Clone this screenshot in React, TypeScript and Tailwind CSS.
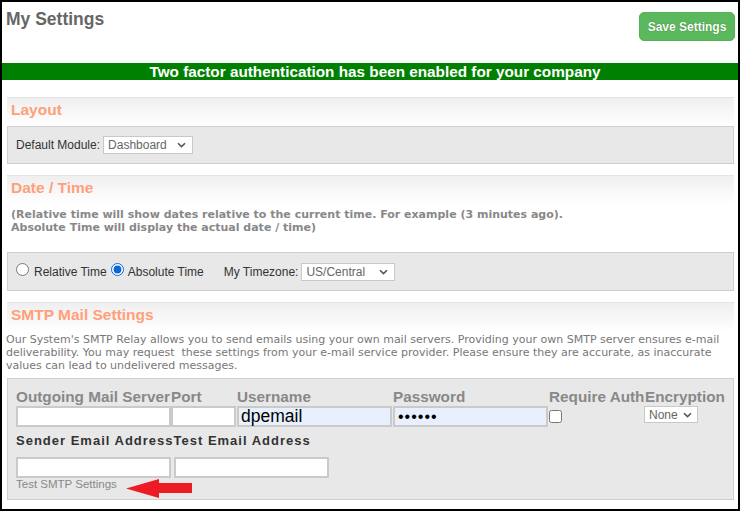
import React from "react";

function Chevron() {
  return (
    <svg width="9" height="6" viewBox="0 0 9 6" className="shrink-0">
      <path d="M1 1.2 L4.5 4.6 L8 1.2" fill="none" stroke="#555" strokeWidth="1.6" />
    </svg>
  );
}

function SectionHeader({ title }: { title: string }) {
  return (
    <div className="h-[29px] border-t border-[#e4e4e4] bg-linear-to-b from-[#efefef] to-white pl-[4px] pt-[2px] text-[15.5px] font-bold leading-[20px] text-[#ffa07a]">
      {title}
    </div>
  );
}

export default function App() {
  return (
    <div className="w-[740px] h-[511px] overflow-hidden border-2 border-black bg-white font-['Liberation_Sans',Arial,sans-serif]">
      {/* Title row */}
      <div className="flex h-[61px] items-start justify-between">
        <h1 className="ml-[4px] mt-[7px] text-[17.5px] font-bold leading-[20px] text-[#666]">My Settings</h1>
        <button className="mr-[3px] mt-[10px] h-[29px] w-[96px] rounded-[5px] border border-[#55b155] bg-[#5cb85c] text-[12px] font-bold text-white [text-shadow:0_0_1px_rgba(0,60,0,0.6)]">
          Save Settings
        </button>
      </div>

      {/* Green bar */}
      <div className="h-[17px] bg-[#008000] pl-[10px] text-center text-[15.3px] font-bold leading-[17px] text-white">
        Two factor authentication has been enabled for your company
      </div>

      <div className="ml-[5px] mr-[4px] mt-[17px]">
        {/* Layout */}
        <SectionHeader title="Layout" />
        <div className="flex h-[38px] items-center border border-[#cfcfcf] bg-[#e8e8e8] pl-[8px] text-[12px] text-[#333]">
          <span>Default Module:</span>
          <div className="ml-[3px] flex h-[18px] w-[90px] items-center justify-between border border-[#c8c8c8] bg-white pl-[4px] pr-[6px] text-[12px] text-[#666]">
            <span>Dashboard</span>
            <Chevron />
          </div>
        </div>

        {/* Date / Time */}
        <div className="mt-[11px]">
          <SectionHeader title="Date / Time" />
        </div>
        <div className="whitespace-nowrap pb-[18px] pl-[4px] pt-[4px] font-['DejaVu_Sans',Verdana,sans-serif] text-[11px] font-bold leading-[13px] text-[#888]">
          (Relative time will show dates relative to the current time. For example (3 minutes ago).
          <br />
          Absolute Time will display the actual date / time)
        </div>
        <div className="flex h-[39px] items-center border border-[#cfcfcf] bg-[#e8e8e8] pl-[8px] text-[12px] text-[#333]">
          <input type="radio" name="t" className="mb-[4px] h-[13px] w-[13px]" />
          <span className="ml-[5px]">Relative Time</span>
          <input type="radio" name="t" defaultChecked className="mb-[4px] ml-[4px] h-[13px] w-[13px] accent-[#0b67d6]" />
          <span className="ml-[4px]">Absolute Time</span>
          <span className="ml-[20px]">My Timezone:</span>
          <div className="ml-[3px] flex h-[18px] w-[94px] items-center justify-between border border-[#c8c8c8] bg-white pl-[4px] pr-[6px] text-[12px] text-[#666]">
            <span>US/Central</span>
            <Chevron />
          </div>
        </div>

        {/* SMTP */}
        <div className="mt-[11px]">
          <SectionHeader title="SMTP Mail Settings" />
        </div>
        <div className="-ml-px whitespace-nowrap pb-[6px] pt-[2px] font-['DejaVu_Sans',Verdana,sans-serif] text-[11px] leading-[13px] text-[#777]">
          Our System's SMTP Relay allows you to send emails using your own mail servers. Providing your own SMTP server ensures e-mail
          <br />
          deliverability. You may request&nbsp; these settings from your e-mail service provider. Please ensure they are accurate, as inaccurate
          <br />
          values can lead to undelivered messages.
        </div>
        <div className="h-[122px] border border-[#cfcfcf] bg-[#e8e8e8] pl-[8px] pt-[9px]">
          <div className="grid grid-cols-[155px_66px_156px_156px_96px_auto]">
            <div className="whitespace-nowrap text-[15.3px] font-bold leading-[18px] text-[#888]">Outgoing Mail Server</div>
            <div className="whitespace-nowrap text-[15.3px] font-bold leading-[18px] text-[#888]">Port</div>
            <div className="whitespace-nowrap text-[15.3px] font-bold leading-[18px] text-[#888]">Username</div>
            <div className="whitespace-nowrap text-[15.3px] font-bold leading-[18px] text-[#888]">Password</div>
            <div className="whitespace-nowrap text-[15.3px] font-bold leading-[18px] text-[#888]">Require Auth</div>
            <div className="whitespace-nowrap text-[15.3px] font-bold leading-[18px] text-[#888]">Encryption</div>

            <div className="h-[21px] w-[155px] border-2 border-[#cacaca] bg-white" />
            <div className="h-[21px] w-[65px] border-2 border-[#cacaca] bg-white" />
            <div className="flex h-[21px] w-[155px] items-center border-2 border-[#cacaca] bg-[#e8f0fe] pl-[2px] text-[17.5px] leading-none text-black">
              dpemail
            </div>
            <div className="flex h-[21px] w-[155px] items-center border-2 border-[#cacaca] bg-[#e8f0fe] pl-[3px] text-[16px] leading-none tracking-[1px] text-black">
              ••••••
            </div>
            <div>
              <input type="checkbox" className="h-[13px] w-[13px]" />
            </div>
            <div>
              <div className="-ml-px flex h-[17px] w-[54px] items-center justify-between border border-[#c8c8c8] bg-white pl-[4px] pr-[5px] text-[12px] text-[#666]">
                <span>None</span>
                <Chevron />
              </div>
            </div>
          </div>

          <div className="mt-[3px] grid grid-cols-[auto_auto] justify-start">
            <div className="whitespace-nowrap text-[13px] font-bold leading-[16px] tracking-[1px] text-[#333]">Sender Email Address</div>
            <div className="whitespace-nowrap text-[13px] font-bold leading-[16px] tracking-[1px] text-[#333]">Test Email Address</div>
            <div className="mt-[8px] h-[21px] w-[155px] border-2 border-[#cacaca] bg-white" />
            <div className="mt-[8px] h-[21px] w-[155px] border-2 border-[#cacaca] bg-white" />
          </div>

          <div className="flex items-start">
            <span className="text-[11.5px] leading-[13px] text-[#888]">Test SMTP Settings</span>
            <svg width="66" height="19" viewBox="0 0 66 19" className="ml-[9px] mt-[1px]">
              <polygon points="0,9.5 33,0 33,4 66,4 66,14 33,14 33,19" fill="#ed1c24" />
            </svg>
          </div>
        </div>
      </div>
    </div>
  );
}
